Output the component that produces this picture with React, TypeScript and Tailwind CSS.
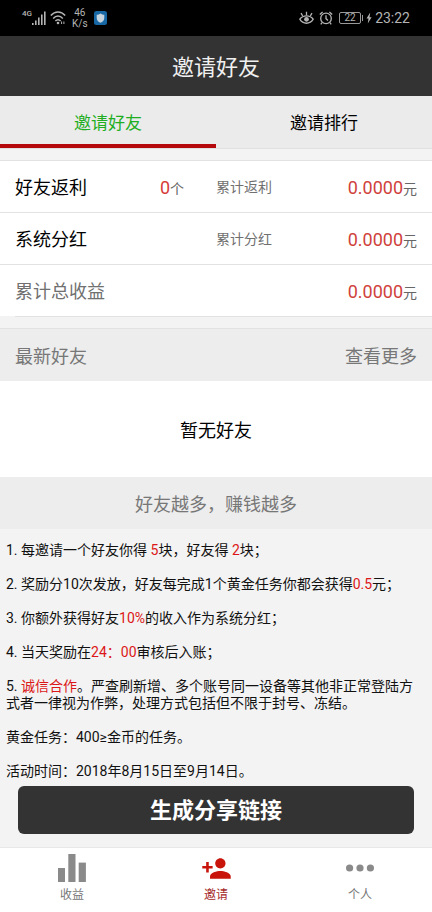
import { MdPersonAdd } from "react-icons/md";

const stats = [
  { label: "好友返利", count: "0", note: "累计返利", amount: "0.0000" },
  { label: "系统分红", note: "累计分红", amount: "0.0000" },
  { label: "累计总收益", muted: true, amount: "0.0000" },
];

function StatusBar() {
  return (
    <div className="flex h-9 items-center justify-between bg-black pl-[22px] pr-[22px] text-[#b4b4b4]">
      <div className="flex items-center">
        <span className="self-start pt-[2px] text-[8px] font-medium leading-[10px]">4G</span>
        <svg className="h-[14px] w-[15px]" viewBox="0 0 15 14" fill="currentColor">
          <rect x="0" y="12" width="1.6" height="2" />
          <rect x="3" y="9.5" width="1.6" height="4.5" />
          <rect x="6" y="6.5" width="1.6" height="7.5" />
          <rect x="9" y="3.5" width="1.6" height="10.5" />
          <rect x="12" y="0.5" width="1.6" height="13.5" />
        </svg>
        <svg
          className="ml-[3px] h-[14px] w-4"
          viewBox="0 0 16 14"
          fill="none"
          stroke="currentColor"
          strokeWidth="1.5"
        >
          <path d="M.8 4.6C5-.2 11-.2 15.2 4.6M3.2 7.4c2.8-3.2 6.8-3.2 9.6 0M5.4 10c1.6-1.8 3.6-1.8 5.2 0" />
          <circle cx="8" cy="12" r="1.3" fill="currentColor" stroke="none" />
          <path d="M11.6 10.5v2.5M13.9 10.5v2.5" strokeWidth="1" />
        </svg>
        <div className="ml-[6px] text-center text-[10px] leading-[11px]">
          <div>46</div>
          <div>K/s</div>
        </div>
        <svg className="ml-[6px] h-[14px] w-[13px]" viewBox="0 0 13 14">
          <rect width="13" height="14" rx="2.5" fill="#1767a5" />
          <path
            d="M6.5 2.4c1.2.9 2.4 1.2 3.8 1.3v3.2c0 2.3-1.6 3.8-3.8 4.8-2.2-1-3.8-2.5-3.8-4.8V3.7c1.4-.1 2.6-.4 3.8-1.3z"
            fill="#c4d3de"
          />
        </svg>
      </div>
      <div className="flex items-center">
        <svg
          className="h-[14px] w-[15px]"
          viewBox="0 0 15 14"
          fill="none"
          stroke="currentColor"
          strokeWidth="1.3"
        >
          <path d="M.8 8.2C4 3.8 11 3.8 14.2 8.2 11 13.6 4 13.6.8 8.2z" />
          <circle cx="7.5" cy="8.3" r="2.4" fill="currentColor" stroke="none" />
          <path d="M7.5.8v3.4M2 2.2l1.7 2.6M13 2.2l-1.7 2.6" />
        </svg>
        <svg
          className="ml-[5px] h-[14px] w-[14px]"
          viewBox="0 0 14 14"
          fill="none"
          stroke="currentColor"
          strokeWidth="1.3"
        >
          <circle cx="7" cy="7.4" r="5.3" />
          <path d="M7 4.3v3.3l2 1.8M.8 3.4L3.6.9M13.2 3.4L10.4.9M3 11.6l-1.2 1.7M11 11.6l1.2 1.7" />
        </svg>
        <span className="ml-[6px] flex h-3 w-[22px] items-center justify-center rounded-[2px] border border-[#999999] text-[10px] leading-none">
          22
        </span>
        <span className="ml-px h-[6px] w-px bg-[#999999]" />
        <svg className="ml-[3px] h-3 w-[6px]" viewBox="0 0 6 12" fill="currentColor">
          <path d="M4.2.4L.5 6.4h2L1.8 11.6 5.6 5.3H3.5z" />
        </svg>
        <span className="ml-[3px] text-[14px] leading-5">23:22</span>
      </div>
    </div>
  );
}

function Tabs() {
  return (
    <div className="flex border-b border-[#e0e0e0] bg-[#ebebeb] text-[17px]">
      <button className="h-[52px] flex-1 border-b-4 border-[#b4080c] pt-[7px] text-[#1fae1f]">
        邀请好友
      </button>
      <button className="h-[52px] flex-1 border-b-4 border-transparent pt-[7px] text-black">
        邀请排行
      </button>
    </div>
  );
}

function Stats() {
  return (
    <div className="mt-[11px] bg-white">
      {stats.map((row) => (
        <div
          key={row.label}
          className="grid h-[52px] grid-cols-2 items-center border-t border-[#e2e2e2] pt-[2px]"
        >
          <div className="flex items-center justify-between pl-[15px] pr-8">
            <span className={row.muted ? "text-[18px] text-[#707070]" : "text-[18px] text-black"}>
              {row.label}
            </span>
            {row.count && (
              <span className="text-[14px] text-[#666666]">
                <span className="text-[18px] text-[#d63b36]">{row.count}</span>个
              </span>
            )}
          </div>
          <div className="flex items-center justify-between pr-[15px]">
            <span className="text-[14px] text-[#707070]">{row.note}</span>
            <span className="text-[14px] text-[#666666]">
              <span className="text-[18px] text-[#d0413c]">{row.amount}</span>元
            </span>
          </div>
        </div>
      ))}
    </div>
  );
}

function Red({ children }: { children: React.ReactNode }) {
  return <span className="text-[#dc1717]">{children}</span>;
}

function Rules() {
  return (
    <div className="flex flex-col gap-[17px] px-[6px] pt-[13px] text-[14px] leading-[17px] text-[#111111]">
      <p>
        1. 每邀请一个好友你得 <Red>5</Red>块，好友得 <Red>2</Red>块；
      </p>
      <p>
        2. 奖励分10次发放，好友每完成1个黄金任务你都会获得<Red>0.5</Red>元；
      </p>
      <p>
        3. 你额外获得好友<Red>10%</Red>的收入作为系统分红；
      </p>
      <p>
        4. 当天奖励在<Red>24：00</Red>审核后入账；
      </p>
      <p>
        5. <Red>诚信合作</Red>。严查刷新增、多个账号同一设备等其他非正常登陆方式者一律视为作弊，处理方式包括但不限于封号、冻结。
      </p>
      <p>黄金任务：400≥金币的任务。</p>
      <p>活动时间：2018年8月15日至9月14日。</p>
    </div>
  );
}

function BottomNav() {
  return (
    <nav className="mt-auto grid h-[65px] grid-cols-3 border-t border-[#e8e8e8] bg-white text-[12px] leading-4 text-[#777777]">
      <a href="#income" className="flex flex-col items-center pt-[6px]">
        <svg className="h-7 w-7" viewBox="0 0 28 28" fill="#8a8a8a">
          <rect x="0" y="14" width="7" height="14" />
          <rect x="10.3" y="0" width="7.2" height="28" />
          <rect x="20.7" y="8.6" width="7.2" height="19.4" />
        </svg>
        <span className="mt-[5px]">收益</span>
      </a>
      <a href="#invite" className="flex flex-col items-center pt-[6px] text-[#a52a2a]">
        <span className="flex h-7 items-center">
          <MdPersonAdd className="size-[31px] text-[#c8140a]" />
        </span>
        <span className="mt-[5px]">邀请</span>
      </a>
      <a href="#me" className="flex flex-col items-center pt-[6px]">
        <svg className="h-7 w-7" viewBox="0 0 28 28" fill="#8a8a8a">
          <circle cx="3.6" cy="14" r="3.6" />
          <circle cx="14" cy="14" r="3.6" />
          <circle cx="24.4" cy="14" r="3.6" />
        </svg>
        <span className="mt-[5px]">个人</span>
      </a>
    </nav>
  );
}

export default function App() {
  return (
    <div
      lang="zh-CN"
      className="flex min-h-screen flex-col bg-[#f3f3f3] font-[Roboto,'Noto_Sans_CJK_SC',sans-serif]"
    >
      <StatusBar />
      <header className="flex h-[60px] items-center justify-center bg-[#333333] pt-[2px]">
        <h1 className="text-[22px] text-[#f0f0f0]">邀请好友</h1>
      </header>
      <Tabs />
      <Stats />
      <div className="ml-[15px] h-3 border-t border-[#e2e2e2]" />
      <div className="flex h-[53px] items-center justify-between border-t border-[#e2e2e2] bg-[#ededed] px-[15px] pt-[2px] text-[18px] text-[#777777]">
        <h2>最新好友</h2>
        <a href="#friends">查看更多</a>
      </div>
      <div className="flex h-24 items-center justify-center bg-white pt-[2px] text-[18px] text-black">
        暂无好友
      </div>
      <div className="flex h-[52px] items-center justify-center bg-[#ededed] pt-[2px] text-[18px] text-[#777777]">
        好友越多，赚钱越多
      </div>
      <Rules />
      <button className="mx-[18px] mb-[13px] mt-[6px] h-12 rounded-md bg-[#333333] text-[22px] font-bold text-white">
        生成分享链接
      </button>
      <BottomNav />
    </div>
  );
}
